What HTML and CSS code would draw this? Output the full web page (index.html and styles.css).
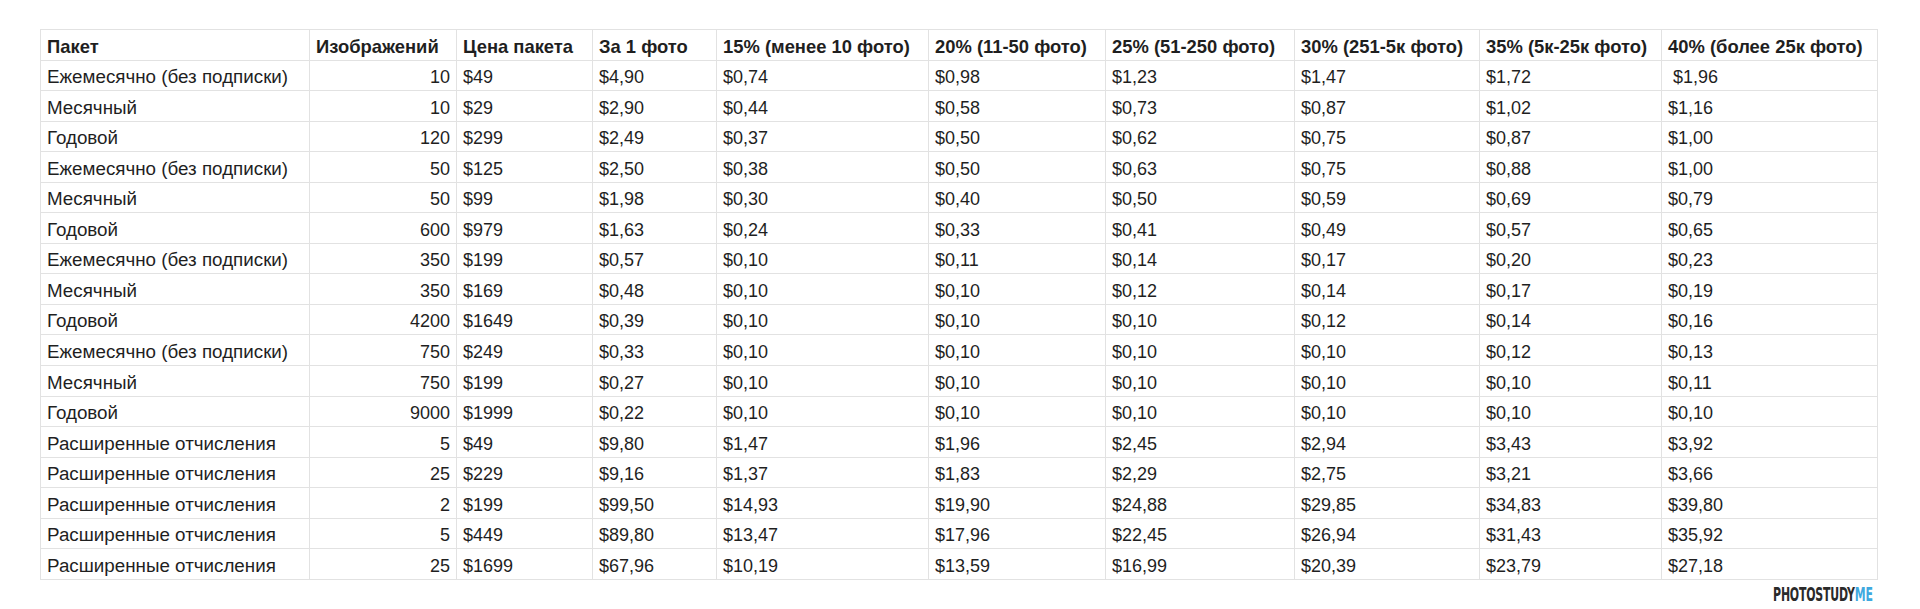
FILE: index.html
```html
<!DOCTYPE html>
<html lang="ru">
<head>
<meta charset="utf-8">
<title>Пакеты</title>
<link rel="stylesheet" href="styles.css">
</head>
<body>
<div class="page">
  <table class="sheet">
    <colgroup>
      <col class="c1"><col class="c2"><col class="c3"><col class="c4"><col class="c5">
      <col class="c6"><col class="c7"><col class="c8"><col class="c9"><col class="c10">
    </colgroup>
    <thead>
      <tr>
        <th>Пакет</th><th>Изображений</th><th>Цена пакета</th><th>За 1 фото</th><th>15% (менее 10 фото)</th><th>20% (11-50 фото)</th><th>25% (51-250 фото)</th><th>30% (251-5к фото)</th><th>35% (5к-25к фото)</th><th>40% (более 25к фото)</th>
      </tr>
    </thead>
    <tbody>
      <tr><td class="label">Ежемесячно (без подписки)</td><td class="num">10</td><td>$49</td><td>$4,90</td><td>$0,74</td><td>$0,98</td><td>$1,23</td><td>$1,47</td><td>$1,72</td><td>&nbsp;$1,96</td></tr>
      <tr><td class="label">Месячный</td><td class="num">10</td><td>$29</td><td>$2,90</td><td>$0,44</td><td>$0,58</td><td>$0,73</td><td>$0,87</td><td>$1,02</td><td>$1,16</td></tr>
      <tr><td class="label">Годовой</td><td class="num">120</td><td>$299</td><td>$2,49</td><td>$0,37</td><td>$0,50</td><td>$0,62</td><td>$0,75</td><td>$0,87</td><td>$1,00</td></tr>
      <tr><td class="label">Ежемесячно (без подписки)</td><td class="num">50</td><td>$125</td><td>$2,50</td><td>$0,38</td><td>$0,50</td><td>$0,63</td><td>$0,75</td><td>$0,88</td><td>$1,00</td></tr>
      <tr><td class="label">Месячный</td><td class="num">50</td><td>$99</td><td>$1,98</td><td>$0,30</td><td>$0,40</td><td>$0,50</td><td>$0,59</td><td>$0,69</td><td>$0,79</td></tr>
      <tr><td class="label">Годовой</td><td class="num">600</td><td>$979</td><td>$1,63</td><td>$0,24</td><td>$0,33</td><td>$0,41</td><td>$0,49</td><td>$0,57</td><td>$0,65</td></tr>
      <tr><td class="label">Ежемесячно (без подписки)</td><td class="num">350</td><td>$199</td><td>$0,57</td><td>$0,10</td><td>$0,11</td><td>$0,14</td><td>$0,17</td><td>$0,20</td><td>$0,23</td></tr>
      <tr><td class="label">Месячный</td><td class="num">350</td><td>$169</td><td>$0,48</td><td>$0,10</td><td>$0,10</td><td>$0,12</td><td>$0,14</td><td>$0,17</td><td>$0,19</td></tr>
      <tr><td class="label">Годовой</td><td class="num">4200</td><td>$1649</td><td>$0,39</td><td>$0,10</td><td>$0,10</td><td>$0,10</td><td>$0,12</td><td>$0,14</td><td>$0,16</td></tr>
      <tr><td class="label">Ежемесячно (без подписки)</td><td class="num">750</td><td>$249</td><td>$0,33</td><td>$0,10</td><td>$0,10</td><td>$0,10</td><td>$0,10</td><td>$0,12</td><td>$0,13</td></tr>
      <tr><td class="label">Месячный</td><td class="num">750</td><td>$199</td><td>$0,27</td><td>$0,10</td><td>$0,10</td><td>$0,10</td><td>$0,10</td><td>$0,10</td><td>$0,11</td></tr>
      <tr><td class="label">Годовой</td><td class="num">9000</td><td>$1999</td><td>$0,22</td><td>$0,10</td><td>$0,10</td><td>$0,10</td><td>$0,10</td><td>$0,10</td><td>$0,10</td></tr>
      <tr><td class="label">Расширенные отчисления</td><td class="num">5</td><td>$49</td><td>$9,80</td><td>$1,47</td><td>$1,96</td><td>$2,45</td><td>$2,94</td><td>$3,43</td><td>$3,92</td></tr>
      <tr><td class="label">Расширенные отчисления</td><td class="num">25</td><td>$229</td><td>$9,16</td><td>$1,37</td><td>$1,83</td><td>$2,29</td><td>$2,75</td><td>$3,21</td><td>$3,66</td></tr>
      <tr><td class="label">Расширенные отчисления</td><td class="num">2</td><td>$199</td><td>$99,50</td><td>$14,93</td><td>$19,90</td><td>$24,88</td><td>$29,85</td><td>$34,83</td><td>$39,80</td></tr>
      <tr><td class="label">Расширенные отчисления</td><td class="num">5</td><td>$449</td><td>$89,80</td><td>$13,47</td><td>$17,96</td><td>$22,45</td><td>$26,94</td><td>$31,43</td><td>$35,92</td></tr>
      <tr><td class="label">Расширенные отчисления</td><td class="num">25</td><td>$1699</td><td>$67,96</td><td>$10,19</td><td>$13,59</td><td>$16,99</td><td>$20,39</td><td>$23,79</td><td>$27,18</td></tr>
    </tbody>
  </table>
  <div class="brand"><span class="brand-text">PHOTOSTUDY<span class="brand-me">ME</span></span></div>
</div>
</body>
</html>
```

FILE: styles.css
```css
html, body {
  margin: 0;
  padding: 0;
  background: #ffffff;
}

.page {
  padding: 29px 0 0 40px;
  width: 1837px;
}

.sheet {
  border-collapse: collapse;
  table-layout: fixed;
  width: 1837px;
  font-family: "Liberation Sans", Arial, sans-serif;
  font-size: 18px;
  color: #1f1f1f;
}

.c1 { width: 269px; }
.c2 { width: 147px; }
.c3 { width: 136px; }
.c4 { width: 124px; }
.c5 { width: 212px; }
.c6 { width: 177px; }
.c7 { width: 189px; }
.c8 { width: 185px; }
.c9 { width: 182px; }
.c10 { width: 216px; }

.sheet tr {
  height: 30.56px;
}

.sheet th,
.sheet td {
  border: 1px solid #e2e2e2;
  padding: 0 6px 3px 6px;
  line-height: 20px;
  vertical-align: bottom;
  text-align: left;
  white-space: pre;
  overflow: hidden;
}

.sheet th {
  font-weight: bold;
  font-size: 18.4px;
}

.sheet td.label {
  font-size: 18.8px;
}

.sheet td.num {
  text-align: right;
  padding-right: 6px;
}

.brand {
  display: flex;
  justify-content: flex-end;
  padding-top: 6px;
  padding-right: 4px;
}

.brand-text {
  display: inline-block;
  font-family: "DejaVu Sans Condensed", "DejaVu Sans", sans-serif;
  font-weight: bold;
  font-size: 19px;
  line-height: 16px;
  color: #2a2a2a;
  transform: scaleX(0.64);
  transform-origin: right center;
  letter-spacing: -0.3px;
}

.brand-me {
  color: #3ea9df;
}
```
